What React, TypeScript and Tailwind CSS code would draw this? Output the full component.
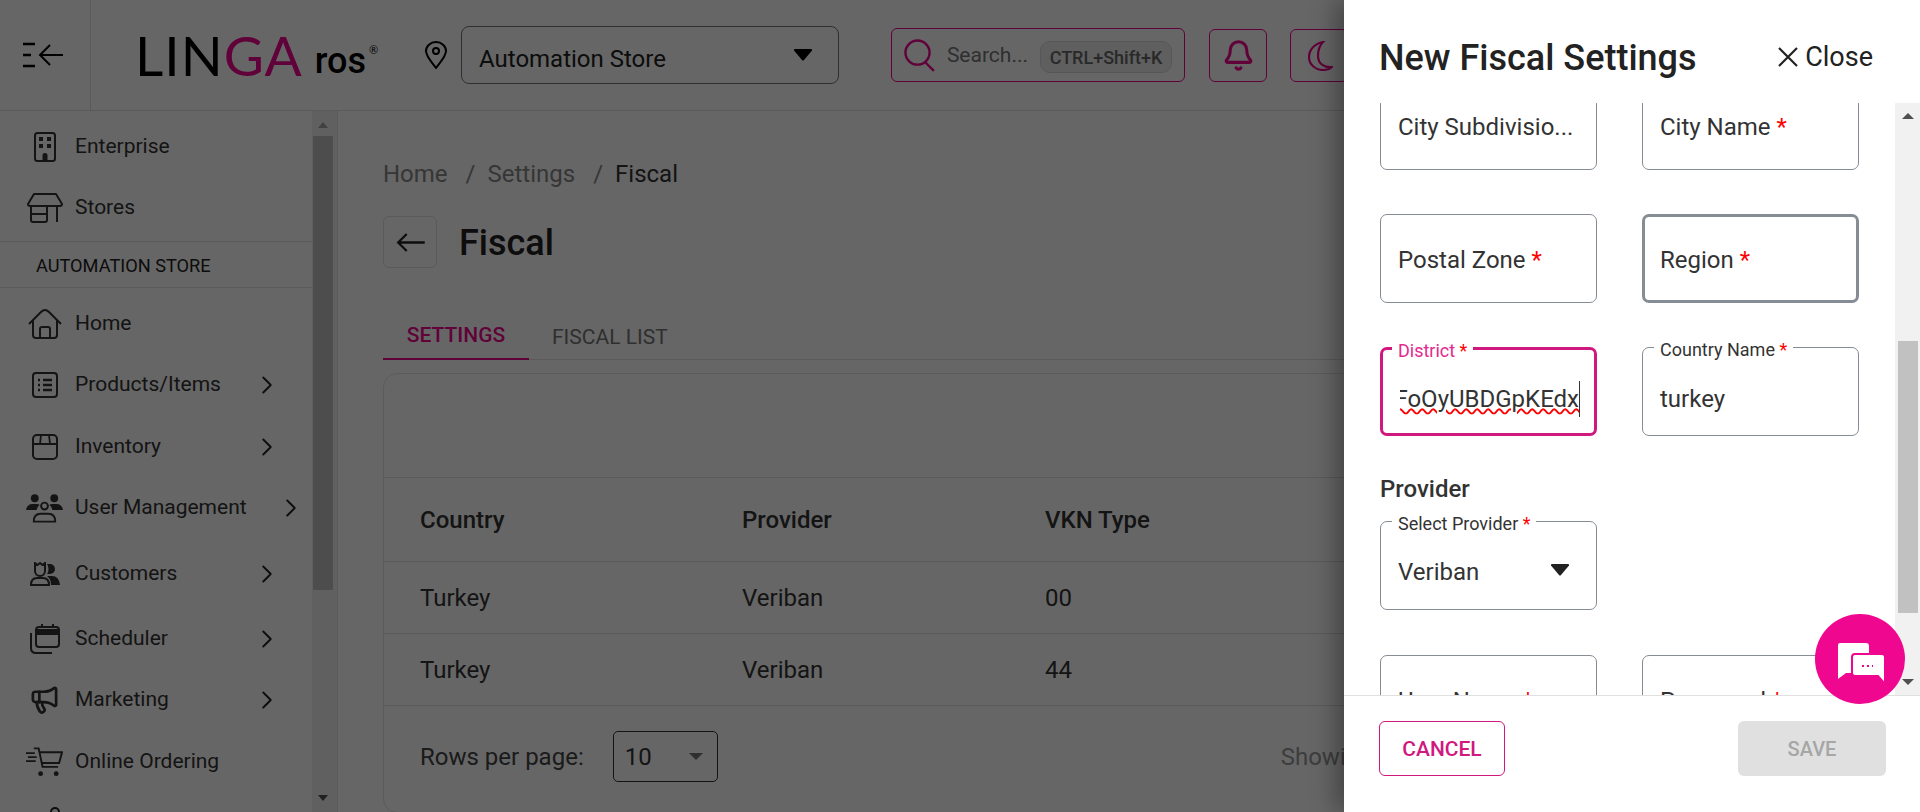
import { ReactNode } from "react";
import { ChevronRight, Bell, Megaphone } from "lucide-react";

const Caret = ({ className }: { className: string }) => (
  <svg viewBox="0 0 20 12" className={className} fill="currentColor">
    <path d="M1 1.5Q.5 0 2 0h16q1.5 0 1 1.5l-8 9.500q-1 1-2 0z" />
  </svg>
);

const BuildingIcon = () => (
  <svg viewBox="0 0 22 30" className="w-[22px] h-[30px]" fill="none" stroke="currentColor" strokeWidth="2">
    <rect x="1" y="1" width="20" height="28" rx="2.500" />
    <path fill="currentColor" stroke="none" d="M5 5h4v4H5zM13 5h4v4h-4zM5 12h4v4H5zM13 12h4v4h-4zM8.500 29v-6q0-2 2.500-2t2.500 2v6z" />
  </svg>
);

const HouseIcon = () => (
  <svg viewBox="0 0 34 30" className="w-[34px] h-[30px]" fill="none" stroke="currentColor" strokeWidth="2" strokeLinejoin="round">
    <path d="M1 15L13 3q4-4 8 0l12 12" />
    <path d="M5 11v15q0 3 3 3h18q3 0 3-3V11" />
    <path d="M12 29V20q0-2 2-2h6q2 0 2 2v9" />
  </svg>
);

const StoreIcon = () => (
  <svg viewBox="0 0 36 30" className="w-[36px] h-[30px]" fill="none" stroke="currentColor" strokeWidth="2" strokeLinejoin="round">
    <path d="M7 1h22l6 10q0 2-2 2H3q-2 0-2-2z" />
    <path d="M4 13v14q0 2 2 2h12q2 0 2-2V13M4 21h16M30 13v16" />
  </svg>
);

const ListIcon = () => (
  <svg viewBox="0 0 26 26" className="w-[26px] h-[26px]" fill="none" stroke="currentColor" strokeWidth="2">
    <rect x="1" y="1" width="24" height="24" rx="3" />
    <path strokeWidth="2.400" d="M11 8h9M11 13h9M11 18h9M6 8h2M6 13h2M6 18h2" />
  </svg>
);

const BoxIcon = () => (
  <svg viewBox="0 0 26 26" className="w-[26px] h-[26px]" fill="none" stroke="currentColor" strokeWidth="2">
    <rect x="1" y="1" width="24" height="24" rx="4" />
    <path d="M1 10h24M9 1l-1 9M17 1l1 9" strokeWidth="1.800" />
  </svg>
);

const UsersIcon = () => (
  <svg viewBox="0 0 38 30" className="w-[37px] h-[30px]" fill="currentColor">
    <circle cx="9" cy="5" r="4" />
    <circle cx="29" cy="5" r="4" />
    <path d="M0 17q1-6 7-6h4q2 0 3 1-3 2-3 5zM38 17q-1-6-7-6h-4q-2 0-3 1 3 2 3 5z" />
    <circle cx="19" cy="13" r="3.500" fill="none" stroke="currentColor" strokeWidth="2" />
    <path d="M8 29q0-8 7-8h8q7 0 7 8z" fill="none" stroke="currentColor" strokeWidth="2" />
  </svg>
);

const CustomersIcon = () => (
  <svg viewBox="0 0 30 24" className="w-[30px] h-[24px]" fill="currentColor">
    <path d="M5 1l2.500 2L10 1l2.500 2L15 1v8a5 5 0 0 1-10 0z" fill="none" stroke="currentColor" strokeWidth="2" />
    <path d="M17 2h3a5 5 0 0 1 0 10h-3q1.500-2 1.500-5T17 2z" />
    <path d="M1 23q0-7 6-7h6q6 0 6 7z" fill="none" stroke="currentColor" strokeWidth="2" />
    <path d="M17 14h5q7 0 8 9h-9q0-6-4-9z" />
  </svg>
);

const SchedulerIcon = () => (
  <svg viewBox="0 0 30 30" className="w-[30px] h-[30px]" fill="none" stroke="currentColor" strokeWidth="2">
    <rect x="6" y="3" width="23" height="20" rx="3" />
    <path d="M6 6h23v4H6z" fill="currentColor" />
    <path d="M12 0v4M23 0v4" />
    <path d="M1 9v15q0 5 5 5h16" />
  </svg>
);

const CartIcon = () => (
  <svg viewBox="0 0 38 30" className="w-[37px] h-[30px]" fill="none" stroke="currentColor" strokeWidth="2">
    <path d="M8 1h5l4 19h16" />
    <path d="M14 5h23l-3 11H16" />
    <path d="M0 6h9M2 10h9M0 14h10" strokeWidth="1.800" />
    <circle cx="15" cy="27" r="2.500" fill="currentColor" stroke="none" />
    <circle cx="31" cy="27" r="2.500" fill="currentColor" stroke="none" />
  </svg>
);

const navItems: { label: string; icon: ReactNode; row: string; labelW?: string }[] = [
  { label: "Home", icon: <HouseIcon />, row: "h-[61px]" },
  { label: "Products/Items", icon: <ListIcon />, row: "h-[62px]", labelW: "w-[177px]" },
  { label: "Inventory", icon: <BoxIcon />, row: "h-[62px]", labelW: "w-[177px]" },
  { label: "User Management", icon: <UsersIcon />, row: "h-[60px]", labelW: "w-[201px]" },
  { label: "Customers", icon: <CustomersIcon />, row: "h-[72px]", labelW: "w-[177px]" },
  { label: "Scheduler", icon: <SchedulerIcon />, row: "h-[58px]", labelW: "w-[177px]" },
  { label: "Marketing", icon: <Megaphone size={31} strokeWidth={2.1} />, row: "h-[63px]", labelW: "w-[177px]" },
  { label: "Online Ordering", icon: <CartIcon />, row: "h-[62px]" },
];

const NavRow = ({ label, icon, row, labelW }: { label: string; icon: ReactNode; row: string; labelW?: string }) => (
  <div className={`flex items-center text-[21px] text-[#333] ${row}`}>
    <div className="w-[75px] shrink-0 pl-[14px] flex justify-center">{icon}</div>
    <span className={`whitespace-nowrap ${labelW ?? ""}`}>{label}</span>
    {labelW && <ChevronRight size={30} strokeWidth={1.5} className="text-[#222] shrink-0" />}
  </div>
);

const Sidebar = () => (
  <aside className="w-[338px] shrink-0 flex border-r border-[#e4e4e4] overflow-hidden">
    <div className="w-[312px] shrink-0">
      <div className="pt-[5px] border-b border-[#e0e0e0] h-[131px]">
        <NavRow label="Enterprise" icon={<BuildingIcon />} row="h-[61px]" />
        <NavRow label="Stores" icon={<StoreIcon />} row="h-[62px]" />
      </div>
      <div className="h-[46px] flex items-center pl-[36px] pt-[2px] border-b border-[#e0e0e0] text-[18.200px] text-[#222]">
        AUTOMATION STORE
      </div>
      <div className="pt-[5px]">
        {navItems.map((item) => (
          <NavRow key={item.label} {...item} />
        ))}
        <div className="pl-[50px] pt-[14px] text-[#222]">
          <div className="w-[10px] h-[14px] border-2 border-current rounded-full" />
        </div>
      </div>
    </div>
    <div className="w-[25px] bg-[#f1f1f1] relative pl-[1px] pr-[4px]">
      <div className="h-[25px] flex items-center justify-center pt-[2px]">
        <div className="w-0 h-0 border-x-[5px] border-x-transparent border-b-[6px] border-b-[#a3a3a3]" />
      </div>
      <div className="h-[454px] bg-[#c1c1c1]" />
      <div className="absolute bottom-[11px] left-[6px] w-0 h-0 border-x-[5px] border-x-transparent border-t-[6px] border-t-[#505050]" />
    </div>
  </aside>
);

const TopBar = () => (
  <header className="h-[111px] shrink-0 flex border-b border-[#e0e0e0]">
    <div className="w-[91px] shrink-0 border-r border-[#e0e0e0] flex items-center justify-center pr-[4px] text-black">
      <svg viewBox="0 0 40 26" className="w-[40px] h-[26px]" fill="none" stroke="currentColor" strokeWidth="2.600">
        <path d="M0 2h12M0 13h8M0 24h12" />
        <path d="M40 13H18M27 3L17 13l10 10" strokeWidth="2" />
      </svg>
    </div>
    <div className="ml-[44px] w-[290px] shrink-0 flex items-center font-['Lato',sans-serif] text-black">
      <span className="text-[55px] font-normal tracking-[1px] leading-none">
        LIN<span className="text-[#f0078f]">GA</span>
      </span>
      <span className="ml-[12px] mt-[12px] text-[36px] font-medium leading-none font-['Roboto',sans-serif]">ros</span>
      <span className="ml-[3px] -mt-[12px] text-[11px] leading-none">®</span>
    </div>
    <svg viewBox="0 0 22 28" className="w-[22px] h-[28px] self-center shrink-0 text-black" fill="none" stroke="currentColor" strokeWidth="2">
      <path d="M11 27C5 19 1 15 1 10a10 9 0 0 1 20 0c0 5-4 9-10 17z" />
      <circle cx="11" cy="10" r="3" />
    </svg>
    <div className="ml-[14px] mt-[26px] h-[58px] w-[378px] shrink-0 border border-[#777] rounded-[8px] flex items-center justify-between pl-[17px] pr-[25px]">
      <span className="text-[24px] pt-[8px] text-[#222]">Automation Store</span>
      <Caret className="w-[20px] h-[12px] text-black" />
    </div>
    <div className="ml-[52px] mt-[28px] h-[54px] w-[294px] shrink-0 border border-[#f0078f] rounded-[6px] flex items-center pl-[12px] pr-[12px]">
      <svg viewBox="0 0 32 34" className="w-[32px] h-[33px] text-[#f0078f]" fill="none" stroke="currentColor" strokeWidth="2.500">
        <circle cx="14" cy="14" r="12.500" />
        <path d="M22 24l9 9" />
      </svg>
      <span className="ml-[12px] pt-[2px] text-[21px] text-[#777] whitespace-nowrap">Search...</span>
      <span className="ml-[12px] mt-[4px] h-[32px] w-[132px] shrink-0 rounded-[10px] border border-[#d8d8d8] bg-[#eeeeee] flex items-center justify-center text-[18px] font-medium text-[#666] whitespace-nowrap">
        CTRL+Shift+K
      </span>
    </div>
    <div className="ml-[24px] mt-[29px] h-[53px] w-[58px] shrink-0 border border-[#f0078f] rounded-[6px] flex items-center justify-center text-[#f0078f]">
      <Bell size={33} strokeWidth={2.2} />
    </div>
    <div className="ml-[23px] mt-[29px] h-[53px] w-[58px] shrink-0 border border-[#f0078f] rounded-[6px] flex items-center pl-[16px] text-[#f0078f]">
      <svg viewBox="0 0 26 30" className="w-[26px] h-[30px]" fill="none" stroke="currentColor" strokeWidth="2.200">
        <path d="M16 1C7 3 2 9 2 16c0 8 7 13 14 13 3 0 7-1 9-3-7 1-14-3-14-11C11 9 13 4 16 1z" />
      </svg>
    </div>
  </header>
);

const rows = [
  { country: "Turkey", provider: "Veriban", vkn: "00" },
  { country: "Turkey", provider: "Veriban", vkn: "44" },
];

const Content = () => (
  <main className="flex-1 min-w-0 pl-[45px] overflow-hidden">
    <div className="h-[44px] mt-[41px] flex items-center text-[24px] text-[#888] whitespace-nowrap">
      <span>Home</span>
      <span className="ml-[18px]">/</span>
      <span className="ml-[12px]">Settings</span>
      <span className="ml-[18px]">/</span>
      <span className="ml-[12px] text-[#333]">Fiscal</span>
    </div>
    <div className="mt-[20px] h-[52px] flex items-center">
      <div className="w-[54px] h-[52px] rounded-[6px] border border-[#e0e0e0] flex items-center justify-center text-[#222]">
        <svg viewBox="0 0 30 20" className="w-[29px] h-[19px]" fill="none" stroke="currentColor" strokeWidth="2.400">
          <path d="M30 10H2M11 1l-9 9 9 9" />
        </svg>
      </div>
      <h1 className="ml-[22px] pt-[2px] text-[36px] leading-none font-medium text-[#222]">Fiscal</h1>
    </div>
    <div className="mt-[44px] w-[1600px] h-[48px] flex border-b border-[#e0e0e0] text-[21px]">
      <div className="w-[146px] h-[48px] border-b-2 border-[#f0078f] text-center pt-[8px] font-medium text-[#f0078f]">SETTINGS</div>
      <div className="ml-[23px] pt-[10px] text-[#777]">FISCAL LIST</div>
    </div>
    <div className="mt-[13px] w-[1600px] h-[440px] border border-[#e4e4e4] rounded-[14px] text-[24px]">
      <div className="h-[104px] border-b border-[#e0e0e0]" />
      <div className="h-[84px] flex items-center pl-[36px] border-b border-[#e0e0e0] font-medium text-[#333]">
        <span className="w-[322px]">Country</span>
        <span className="w-[303px]">Provider</span>
        <span>VKN Type</span>
      </div>
      {rows.map((row) => (
        <div key={row.vkn} className="h-[72px] flex items-center pl-[36px] border-b border-[#e0e0e0] text-[#333]">
          <span className="w-[322px]">{row.country}</span>
          <span className="w-[303px]">{row.provider}</span>
          <span>{row.vkn}</span>
        </div>
      ))}
      <div className="mt-[25px] flex items-center pl-[36px] text-[#444]">
        <span>Rows per page:</span>
        <div className="ml-[29px] w-[105px] h-[51px] border border-[#333] rounded-[5px] flex items-center justify-between pl-[11px] pr-[14px]">
          <span className="text-[#333]">10</span>
          <div className="w-0 h-0 border-x-[7px] border-x-transparent border-t-[7px] border-t-[#777]" />
        </div>
        <span className="ml-[563px] text-[#999]">Showing</span>
      </div>
    </div>
  </main>
);

const Req = () => <span className="text-[#ff0000]"> *</span>;

const Field = ({ label, value, heavy, noMark }: { label: string; value?: string; heavy?: boolean; noMark?: boolean }) => (
  <div className={`relative h-[89px] flex items-center pt-[3px] rounded-[7px] border-[#868c94] text-[24px] text-[#333] ${heavy ? "border-[3px] pl-[15px]" : "border pl-[17px]"}`}>
    {value && (
      <span className="absolute -top-[8px] left-[11px] bg-white px-[6px] text-[18px] leading-[20px] whitespace-nowrap">
        {label}
        <Req />
      </span>
    )}
    {value ? (
      <span className="pt-[12px]">{value}</span>
    ) : (
      <span className="whitespace-nowrap">
        {label}
        {!noMark && <Req />}
      </span>
    )}
  </div>
);

const FiscalDrawer = () => (
  <aside className="absolute top-0 right-0 bottom-0 w-[576px] bg-white flex flex-col shadow-[-8px_0_24px_rgba(0,0,0,0.35)]">
    <div className="h-[103px] shrink-0 flex items-start pl-[35px] pr-[47px] pt-[34px] justify-between">
      <h2 className="text-[36px] leading-[46px] pt-[1px] font-medium text-[#222]">New Fiscal Settings</h2>
      <button className="flex items-center text-[27px] leading-[46px] text-[#222] h-[46px]">
        <svg viewBox="0 0 20 20" className="w-[20px] h-[20px] mr-[7px]" fill="none" stroke="currentColor" strokeWidth="2.200">
          <path d="M1 1l18 18M19 1L1 19" />
        </svg>
        Close
      </button>
    </div>
    <div className="h-[593px] shrink-0 flex overflow-hidden border-b border-[#e0e0e0]">
      <div className="w-[551px] shrink-0 overflow-hidden pl-[36px]">
        <div className="w-[479px] -mt-[22px]">
          <div className="grid grid-cols-[217px_217px] gap-x-[45px] gap-y-[44px]">
            <Field label="City Subdivisio..." noMark />
            <Field label="City Name" />
            <Field label="Postal Zone" />
            <Field label="Region" heavy />
            <div className="relative h-[89px] rounded-[7px] border-[3px] border-[#d0187f] flex items-center pl-[17px] pr-[14px] pt-[14px] text-[24px] text-[#333]">
              <span className="absolute -top-[9px] left-[9px] bg-white px-[6px] text-[18px] leading-[20px] text-[#e6288f] whitespace-nowrap">
                District
                <Req />
              </span>
              <div className="w-full flex justify-end overflow-hidden whitespace-nowrap border-r border-[#333]">
                <span className="underline decoration-wavy decoration-[#ff0000] decoration-[1.5px]">HwFoOyUBDGpKEdx</span>
              </div>
            </div>
            <Field label="Country Name" value="turkey" />
          </div>
          <h3 className="mt-[37px] text-[24px] leading-[32px] font-medium text-[#333]">Provider</h3>
          <div className="relative mt-[16px] h-[89px] w-[217px] rounded-[7px] border border-[#868c94] flex items-center justify-between pl-[17px] pr-[26px] pt-[12px] text-[24px] text-[#333]">
            <span className="absolute -top-[8px] left-[11px] bg-white px-[6px] text-[18px] leading-[20px] whitespace-nowrap">
              Select Provider
              <Req />
            </span>
            <span>Veriban</span>
            <Caret className="w-[20px] h-[12px] -mt-[4px] text-[#222]" />
          </div>
          <div className="mt-[45px] grid grid-cols-[217px_217px] gap-x-[45px]">
            <Field label="User Name" />
            <Field label="Password" />
          </div>
        </div>
      </div>
      <div className="w-[25px] bg-[#f1f1f1] pl-[3px] pr-[2px] relative">
        <div className="h-[238px] pt-[10px] flex justify-center">
          <div className="w-0 h-0 border-x-[6px] border-x-transparent border-b-[6px] border-b-[#505050]" />
        </div>
        <div className="h-[272px] bg-[#c1c1c1]" />
        <div className="absolute bottom-[10px] left-[7px] w-0 h-0 border-x-[6px] border-x-transparent border-t-[6px] border-t-[#505050]" />
      </div>
    </div>
    <div className="flex-1 flex items-start justify-between pl-[35px] pr-[34px] pt-[25px]">
      <button className="w-[126px] h-[55px] pt-[3px] rounded-[6px] border border-[#d0187f] text-[21px] font-medium text-[#d0187f]">CANCEL</button>
      <button className="w-[148px] h-[55px] pt-[1px] rounded-[6px] bg-[#e0e0e0] text-[20px] font-medium text-[#a6a6a6]">SAVE</button>
    </div>
    <div className="absolute left-[471px] top-[614px] w-[90px] h-[90px] rounded-full bg-[#f0078f] flex items-center justify-center pt-[8px] pl-[2px]">
      <svg viewBox="0 0 47 41" className="w-[47px] h-[41px]">
        <path fill="white" d="M2 0h26q3 0 3 3v26q0 1-1 1H8l-8 6V2q0-2 2-2z" />
        <path fill="white" stroke="#f0078f" strokeWidth="2" d="M17 11h27q3 0 3 3v27l-7-8H18q-4 0-4-3V14q0-3 3-3z" />
        <path stroke="#f0078f" strokeWidth="2" strokeDasharray="2 3" d="M24 23h11" />
      </svg>
    </div>
  </aside>
);

export default function App() {
  return (
    <div className="relative w-[1920px] h-[812px] overflow-hidden bg-white font-['Roboto',sans-serif] flex flex-col">
      <TopBar />
      <div className="flex-1 flex min-h-0">
        <Sidebar />
        <Content />
      </div>
      <div className="absolute inset-0 bg-black/60" />
      <FiscalDrawer />
    </div>
  );
}
